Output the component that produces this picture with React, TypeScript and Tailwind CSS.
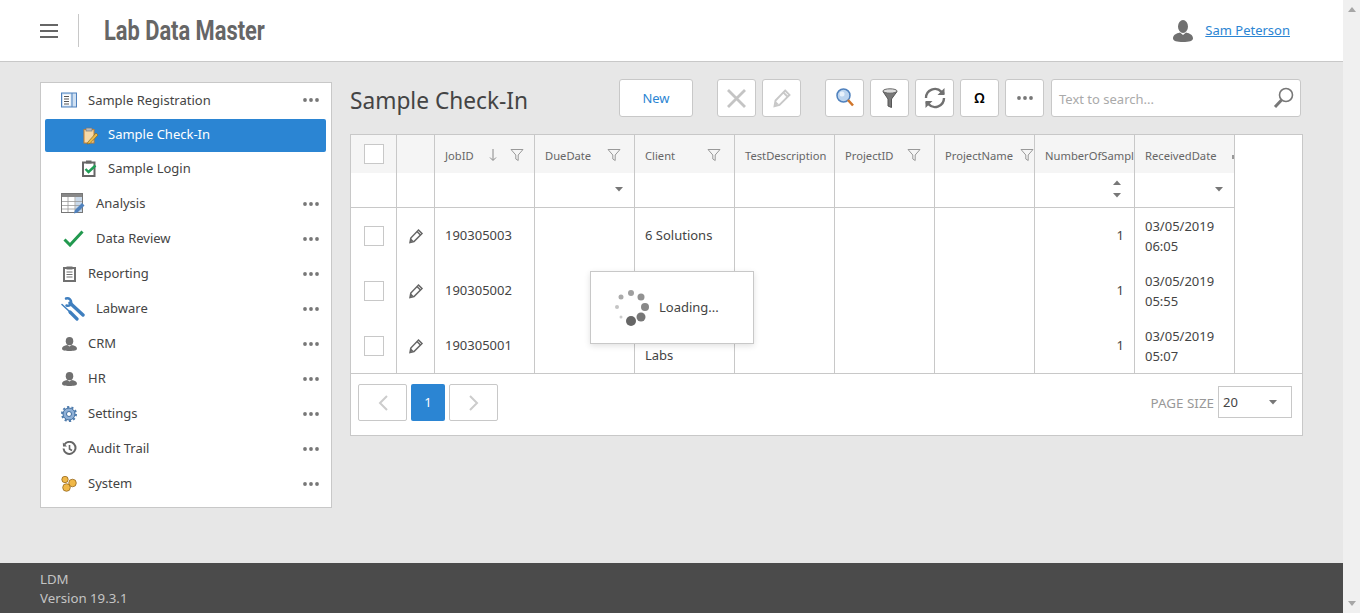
import type { ReactNode } from "react";

const Dots = () => (
  <svg width="16" height="4" viewBox="0 0 16 4" className="shrink-0">
    <circle cx="2" cy="2" r="1.9" fill="#777" />
    <circle cx="8" cy="2" r="1.9" fill="#777" />
    <circle cx="14" cy="2" r="1.9" fill="#777" />
  </svg>
);

const Pencil = ({ color = "#666", size = 16 }: { color?: string; size?: number }) => (
  <svg width={size} height={size} viewBox="0 0 16 16" fill="none" stroke={color} strokeWidth="1.5">
    <path d="M10.5 2 14 5.500 6 13.500 2 14.500 2.800 10Z" />
    <path d="M9 3.500 12.500 7" />
    <path d="M2.500 14 3 10.500 5.500 13Z" fill={color} stroke="none" />
  </svg>
);

const Funnel = () => (
  <svg width="14" height="14" viewBox="0 0 14 14" fill="none" stroke="#999" strokeWidth="1">
    <path d="M1 1.500h12L8.200 7v5.500L5.800 11V7Z" />
  </svg>
);

const Caret = () => (
  <svg width="8" height="5" viewBox="0 0 8 5">
    <path d="M0 0h8L4 4.500Z" fill="#777" />
  </svg>
);

const Person = ({ w = 14, h = 14, color = "#707070" }: { w?: number; h?: number; color?: string }) => (
  <svg width={w} height={h} viewBox="0 0 20 22" fill={color} preserveAspectRatio="none">
    <ellipse cx="10" cy="6.500" rx="5" ry="6.500" />
    <path d="M0 18.500c0-3.500 3-5 7-6l3 2.500 3-2.500c4 1 7 2.500 7 6 0 2.500-4 3.500-10 3.500S0 21 0 18.500Z" />
  </svg>
);

const BookIcon = () => (
  <svg width="16" height="16" viewBox="0 0 16 16">
    <rect x="0.500" y="1" width="15" height="14" fill="#cfe0f2" stroke="#4f81bd" />
    <rect x="2" y="2.500" width="7.500" height="11" fill="#fff" />
    <path d="M3 4.500h5M3 7h5M3 9.500h5M3 12h5" stroke="#555" />
    <rect x="10.500" y="1" width="1" height="14" fill="#4f81bd" />
  </svg>
);

const ClipEditIcon = () => (
  <svg width="16" height="18" viewBox="0 0 16 18">
    <rect x="1" y="2.500" width="10" height="13.500" fill="#f5d9a8" stroke="#c97f2a" />
    <rect x="3" y="1" width="6" height="3" fill="#bbb" stroke="#777" strokeWidth="0.700" />
    <path d="M5 15 13 6l2 2-8 8.500-3 .5Z" fill="#e9b949" stroke="#8a6a20" strokeWidth="0.700" />
  </svg>
);

const ClipCheckIcon = () => (
  <svg width="15" height="17" viewBox="0 0 15 17">
    <rect x="1" y="2.500" width="11.500" height="13.500" fill="#fff" stroke="#666" strokeWidth="2" />
    <rect x="4" y="0.500" width="5.500" height="3" fill="#666" />
    <path d="M3.500 9 6.500 12 13.500 5.500" fill="none" stroke="#1f9d55" strokeWidth="2.400" />
  </svg>
);

const TableIcon = () => (
  <svg width="24" height="22" viewBox="0 0 24 22">
    <rect x="0.500" y="0.500" width="21" height="19" fill="#fff" stroke="#777" />
    <rect x="1" y="1" width="20" height="3" fill="#888" />
    <rect x="14.500" y="4" width="6.500" height="15" fill="#c9d9ea" />
    <path d="M1 8.500h20M1 12.500h20M1 16h20M7 4v15M14 4v15" stroke="#999" strokeWidth="0.800" />
    <path d="M13 20.500 14 17 21 10l2.500 2.500-7 7Z" fill="#4f81bd" />
  </svg>
);

const CheckIcon = () => (
  <svg width="21" height="17" viewBox="0 0 21 17">
    <path d="M1.500 9.500 7 15 19.500 1.500" fill="none" stroke="#22994f" strokeWidth="3" />
  </svg>
);

const ReportIcon = () => (
  <svg width="13" height="16" viewBox="0 0 13 16">
    <rect x="1" y="2" width="11" height="13" fill="#fff" stroke="#707070" strokeWidth="2" />
    <rect x="3.500" y="0.500" width="6" height="3" fill="#707070" />
    <path d="M3.500 6h6M3.500 8.500h6M3.500 11h6" stroke="#707070" />
  </svg>
);

// レンチとドライバー（平行な2本）
const ToolsIcon = () => (
  <svg width="24" height="24" viewBox="0 0 24 24" fill="none" stroke="#3f7fbf" strokeLinecap="round">
    <path d="M9 6 22 18" strokeWidth="3.400" />
    <path d="M5 1.500C8 .5 11 3 10 7 9 8.500 7 9 5.500 8.500" strokeWidth="2.400" />
    <path d="M1 7.500 9 15" strokeWidth="1.500" />
    <path d="M9 15 16 22" strokeWidth="3.200" />
  </svg>
);

const GearIcon = () => (
  <svg width="16" height="16" viewBox="0 0 16 16">
    <circle cx="8" cy="8" r="6" fill="#8fb0d6" stroke="#3f6d9f" />
    <circle cx="8" cy="8" r="7" fill="none" stroke="#4f7cad" strokeWidth="2" strokeDasharray="2.200 2.200" />
    <circle cx="8" cy="8" r="2.500" fill="#fff" stroke="#3f6d9f" />
  </svg>
);

const HistoryIcon = () => (
  <svg width="15" height="15" viewBox="0 0 15 15" fill="none" stroke="#666" strokeWidth="2">
    <path d="M2.500 3.500A6 6 0 1 1 1.500 7.500" />
    <path d="M0.800 1.500 1 5.500h4Z" fill="#666" stroke="none" />
    <path d="M7.500 4v4l2.500 1.500" strokeWidth="1.600" />
  </svg>
);

const HoneyIcon = () => (
  <svg width="16" height="16" viewBox="0 0 16 16" stroke="#8a5a10" strokeWidth="0.700" fill="#f0b848">
    <circle cx="4" cy="3.500" r="3.200" />
    <circle cx="11.500" cy="7" r="3.800" />
    <circle cx="5.500" cy="11.500" r="3.800" />
  </svg>
);

const menu: { label: string; icon: ReactNode; textPl: string; iconBox: string }[] = [
  { label: "Analysis", icon: <TableIcon />, textPl: "pl-[12px]", iconBox: "w-[24px]" },
  { label: "Data Review", icon: <CheckIcon />, textPl: "pl-[12px]", iconBox: "w-[24px] justify-center" },
  { label: "Reporting", icon: <ReportIcon />, textPl: "pl-[4px]", iconBox: "w-[24px] pl-[2px]" },
  { label: "Labware", icon: <ToolsIcon />, textPl: "pl-[12px]", iconBox: "w-[24px]" },
  { label: "CRM", icon: <Person w={15} h={14} />, textPl: "pl-[4px]", iconBox: "w-[24px] pl-[1px]" },
  { label: "HR", icon: <Person w={15} h={14} />, textPl: "pl-[4px]", iconBox: "w-[24px] pl-[1px]" },
  { label: "Settings", icon: <GearIcon />, textPl: "pl-[4px]", iconBox: "w-[24px]" },
  { label: "Audit Trail", icon: <HistoryIcon />, textPl: "pl-[4px]", iconBox: "w-[24px] pl-[1px]" },
  { label: "System", icon: <HoneyIcon />, textPl: "pl-[4px]", iconBox: "w-[24px]" },
];

function Sidebar() {
  return (
    <aside className="w-[292px] shrink-0 self-start border border-[#c8c8c8] bg-white pb-[6px] text-[#444]">
      <div className="flex h-[34px] items-center pl-[20px] pr-[12px]">
        <span className="flex w-[27px]">
          <BookIcon />
        </span>
        <span className="flex-1 pt-[1px]">Sample Registration</span>
        <Dots />
      </div>
      <div className="ml-[4px] mr-[5px] mt-[2px] flex h-[33px] items-center rounded-[2px] bg-[#2b85d3] pl-[38px] text-white">
        <span className="flex w-[25px]">
          <ClipEditIcon />
        </span>
        <span className="pb-[2px]">Sample Check-In</span>
      </div>
      <div className="flex h-[33px] items-center pl-[41px]">
        <span className="flex w-[26px]">
          <ClipCheckIcon />
        </span>
        <span>Sample Login</span>
      </div>
      <div className="mt-[1px]">
        {menu.map((item) => (
          <div key={item.label} className="flex h-[35px] items-center pl-[20px] pr-[12px]">
            <span className={`-mr-[1px] flex ${item.iconBox}`}>{item.icon}</span>
            <span className={`flex-1 ${item.textPl}`}>{item.label}</span>
            <Dots />
          </div>
        ))}
      </div>
    </aside>
  );
}

const ToolButton = ({ children }: { children: ReactNode }) => (
  <button className="flex h-[38px] w-[39px] items-center justify-center rounded-[3px] border border-[#c8c8c8] bg-white">
    {children}
  </button>
);

function Toolbar() {
  return (
    <div className="flex h-[38px] items-center">
      <h1 className="w-[269px] pt-[7px] text-[22.700px] leading-none text-[#444]">Sample Check-In</h1>
      <button className="h-[38px] w-[74px] rounded-[3px] border border-[#c8c8c8] bg-white pt-[1px] text-[#2b85d3]">New</button>
      <div className="ml-[24px] flex gap-[6px]">
        <ToolButton>
          <svg width="21" height="21" viewBox="0 0 21 21" stroke="#c4c4c4" strokeWidth="2.800">
            <path d="M2 2 19 19M19 2 2 19" />
          </svg>
        </ToolButton>
        <ToolButton>
          <Pencil color="#c8c8c8" size={20} />
        </ToolButton>
      </div>
      <div className="ml-[24px] flex gap-[6px]">
        <ToolButton>
          <svg width="18" height="20" viewBox="0 0 18 20">
            <circle cx="7.500" cy="7.500" r="6.500" fill="#bcd4ef" stroke="#4f81bd" strokeWidth="1.500" />
            <circle cx="6" cy="6" r="2.500" fill="#e8f1fb" />
            <path d="M12 12 17 17.500" stroke="#d0752a" strokeWidth="2.600" />
          </svg>
        </ToolButton>
        <ToolButton>
          <svg width="16" height="20" viewBox="0 0 16 20">
            <path d="M1 3.500 6 11v7l3.500 1.500V11L15 3.500" fill="#777" stroke="#555" />
            <ellipse cx="8" cy="3" rx="7" ry="2.200" fill="#ddd" stroke="#666" />
          </svg>
        </ToolButton>
        <ToolButton>
          <svg width="24" height="24" viewBox="0 0 24 24" fill="none" stroke="#707070" strokeWidth="2.400">
            <path d="M3 12a9 9 0 0 1 15.500-6.200L21 8" />
            <path d="M21.500 2v7h-7Z" fill="#707070" stroke="none" />
            <path d="M21 12a9 9 0 0 1-15.500 6.200L3 16" />
            <path d="M2.500 22v-7h7Z" fill="#707070" stroke="none" />
          </svg>
        </ToolButton>
        <ToolButton>
          <span className="text-[14px] font-semibold leading-none text-black">Ω</span>
        </ToolButton>
        <ToolButton>
          <Dots />
        </ToolButton>
      </div>
      <div className="ml-[7px] flex h-[38px] w-[250px] items-center justify-between rounded-[3px] border border-[#c8c8c8] bg-white pl-[7px] pr-[6px]">
        <span className="pt-[4px] text-[#aaa]">Text to search...</span>
        <svg width="21" height="22" viewBox="0 0 21 22" fill="none" stroke="#777">
          <circle cx="13" cy="8" r="6.500" strokeWidth="1.600" />
          <path d="M8.500 13 2 20" strokeWidth="3" />
        </svg>
      </div>
    </div>
  );
}

const columns = [
  { name: "JobID", filter: "left-[75px]", sort: true },
  { name: "DueDate", filter: "left-[72px]", caret: true },
  { name: "Client", filter: "left-[72px]" },
  { name: "TestDescription" },
  { name: "ProjectID", filter: "left-[72px]" },
  { name: "ProjectName", filter: "left-[85px]" },
  { name: "NumberOfSamples", spin: true },
  { name: "ReceivedDate", caret: true, clip: true },
];

const rows = [
  { id: "190305003", client: ["6 Solutions"], time: "06:05" },
  { id: "190305002", client: [], time: "05:55" },
  { id: "190305001", client: ["\u00a0", "Labs"], time: "05:07" },
];

const cell = "border-r border-[#c8c8c8]";
const box = "block h-[20px] w-[20px] border border-[#c8c8c8] bg-white";

function DataGrid() {
  return (
    <div className="relative mt-[17px] border border-[#c8c8c8] bg-white text-[#444]">
      <div className="grid w-[884px] grid-cols-[46px_38px_repeat(8,100px)]">
        <div className={`${cell} flex h-[38px] items-center justify-center bg-[#f5f5f5]`}>
          <span className={box} />
        </div>
        <div className={`${cell} bg-[#f5f5f5]`} />
        {columns.map((c) => (
          <div
            key={c.name}
            className={`${cell} relative flex h-[38px] items-center overflow-hidden bg-[#f5f5f5] pl-[10px] pt-[4px] text-[11.200px] text-[#666]`}
          >
            <span className="whitespace-nowrap">{c.name}</span>
            {c.sort && (
              <svg width="10" height="14" viewBox="0 0 10 14" className="absolute left-[53px] top-[13px]" stroke="#888">
                <path d="M5 1v11M2 9.500 5 12.500 8 9.500" fill="none" />
              </svg>
            )}
            {c.filter && (
              <span className={`absolute top-[13px] ${c.filter}`}>
                <Funnel />
              </span>
            )}
            {c.clip && <span className="absolute left-[97px] top-[20px] h-[4px] w-[2px] bg-[#999]" />}
          </div>
        ))}

        <div className={`${cell} h-[35px] border-b border-b-[#c8c8c8]`} />
        <div className={`${cell} border-b border-b-[#c8c8c8]`} />
        {columns.map((c) => (
          <div key={c.name} className={`${cell} relative border-b border-b-[#c8c8c8]`}>
            {c.caret && (
              <span className="absolute right-[11px] top-[14px] flex">
                <Caret />
              </span>
            )}
            {c.spin && (
              <span className="absolute right-[13px] top-[7px] flex flex-col gap-[8px]">
                <span className="flex rotate-180">
                  <Caret />
                </span>
                <Caret />
              </span>
            )}
          </div>
        ))}

        {rows.map((r) => (
          <div key={r.id} className="contents">
            <div className={`${cell} flex h-[55px] items-center justify-center`}>
              <span className={box} />
            </div>
            <div className={`${cell} flex items-center justify-center`}>
              <Pencil />
            </div>
            <div className={`${cell} flex items-center pl-[10px]`}>{r.id}</div>
            <div className={cell} />
            <div className={`${cell} flex flex-col justify-center pb-[2px] pl-[10px] leading-[20px]`}>
              {r.client.map((line, i) => (
                <span key={i}>{line}</span>
              ))}
            </div>
            <div className={cell} />
            <div className={cell} />
            <div className={cell} />
            <div className={`${cell} flex items-center justify-end pr-[10px]`}>1</div>
            <div className={`${cell} flex flex-col justify-center pl-[10px] leading-[20px]`}>
              <span>03/05/2019</span>
              <span>{r.time}</span>
            </div>
          </div>
        ))}
      </div>

      <div className="flex h-[62px] items-start justify-between border-t border-[#c8c8c8] pl-[7px] pr-[10px]">
        <div className="mt-[10px] flex gap-[4px]">
          <button className="flex h-[37px] w-[49px] items-center justify-center rounded-[2px] border border-[#c8c8c8] bg-white">
            <svg width="12" height="16" viewBox="0 0 12 16" fill="none" stroke="#ccc" strokeWidth="2">
              <path d="M10 1 3 8l7 7" />
            </svg>
          </button>
          <button className="h-[37px] w-[34px] rounded-[2px] bg-[#2b85d3] text-white">1</button>
          <button className="flex h-[37px] w-[49px] items-center justify-center rounded-[2px] border border-[#c8c8c8] bg-white">
            <svg width="12" height="16" viewBox="0 0 12 16" fill="none" stroke="#ccc" strokeWidth="2">
              <path d="M2 1l7 7-7 7" />
            </svg>
          </button>
        </div>
        <div className="mt-[12px] flex items-center">
          <span className="pt-[2px] text-[13.400px] text-[#999]">PAGE SIZE</span>
          <div className="ml-[4px] flex h-[32px] w-[74px] items-center justify-between border border-[#c8c8c8] pl-[4px] pr-[14px]">
            <span className="pt-[2px]">20</span>
            <Caret />
          </div>
        </div>
      </div>

      {/* 読み込み中のオーバーレイ */}
      <div className="absolute left-[239px] top-[136px] flex h-[73px] w-[164px] items-center gap-[10px] border border-[#c8c8c8] bg-white pl-[22px] shadow-[0_2px_6px_rgba(0,0,0,0.12)]">
        <svg width="36" height="36" viewBox="0 0 36 36" className="shrink-0">
          <circle cx="18" cy="31" r="5" fill="#666" />
          <circle cx="28" cy="27" r="4.500" fill="#777" />
          <circle cx="32" cy="17" r="4" fill="#888" />
          <circle cx="28" cy="7" r="3.500" fill="#929292" />
          <circle cx="18" cy="3" r="3" fill="#a0a0a0" />
          <circle cx="8" cy="7" r="2.500" fill="#aaa" />
          <circle cx="4" cy="17" r="2" fill="#c4c4c4" />
          <circle cx="8" cy="27" r="1.500" fill="#ccc" />
        </svg>
        <span>Loading...</span>
      </div>
    </div>
  );
}

export default function App() {
  return (
    <div className="flex h-[613px] overflow-hidden bg-[#e7e7e7] font-['Noto_Sans','Open_Sans',sans-serif] text-[13px]">
      <div className="flex min-w-0 flex-1 flex-col">
        <header className="flex h-[62px] shrink-0 items-center border-b border-[#c8c8c8] bg-white pl-[40px] pr-[53px]">
          <svg width="18" height="14" viewBox="0 0 18 14" stroke="#666" strokeWidth="2">
            <path d="M0 1h18M0 7h18M0 13h18" />
          </svg>
          <span className="ml-[20px] h-[33px] w-px bg-[#c8c8c8]" />
          <div className="ml-[25px] flex-1 pt-[2px]">
            <span className="inline-block origin-left scale-x-[0.78] font-['Roboto',sans-serif] text-[28px] font-bold leading-none text-[#666]">
              Lab Data Master
            </span>
          </div>
          <Person w={20} h={22} />
          <a className="ml-[12px] text-[13px] text-[#2b85d3] underline">Sam Peterson</a>
        </header>
        <main className="flex flex-1 items-start gap-[18px] px-[40px] pt-[20px]">
          <Sidebar />
          <section className="-mt-[3px] min-w-0 flex-1">
            <Toolbar />
            <DataGrid />
          </section>
        </main>
        <footer className="h-[50px] shrink-0 bg-[#4b4b4b] pl-[40px] pt-[7px] text-[13.250px] leading-[19px] text-[#c4c4c4]">
          <div>LDM</div>
          <div>Version 19.3.1</div>
        </footer>
      </div>
      {/* スクロールバー */}
      <div className="flex w-[17px] shrink-0 flex-col items-center justify-between bg-[#f0f0f0] pb-[7px] pt-[7px]">
        <svg width="8" height="5" viewBox="0 0 8 5">
          <path d="M4 0 8 5H0Z" fill="#a6a6a6" />
        </svg>
        <svg width="8" height="5" viewBox="0 0 8 5">
          <path d="M0 0h8L4 5Z" fill="#a6a6a6" />
        </svg>
      </div>
    </div>
  );
}
